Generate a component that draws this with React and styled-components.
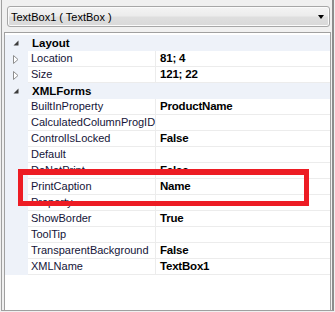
import React from "react";
import styled, { createGlobalStyle } from "styled-components";

const Global = createGlobalStyle`
  html, body { margin: 0; padding: 0; background: #f0f0f0; }
  body { font-family: "Liberation Sans", Arial, sans-serif; }
  #root { width: 335px; height: 312px; }
`;

const Page = styled.div`
  position: relative;
  width: 335px;
  height: 312px;
  box-sizing: border-box;
  padding-left: 1px;
  background: #f0f0f0;
  overflow: hidden;
`;

const Frame = styled.div`
  box-sizing: border-box;
  width: 333px;
  height: 311px;
  border-left: 1px solid #a0a0a0;
  border-right: 2px solid #8c8c8c;
  border-bottom: 1px solid #a0a0a0;
  padding: 6px 1px 0 2px;
  display: flex;
  flex-direction: column;
  gap: 5px;
`;

const Combo = styled.div`
  box-sizing: border-box;
  height: 21px;
  margin: 0 1px 0 3px;
  border: 1px solid #a7a7a7;
  border-radius: 3px;
  background: linear-gradient(#f4f4f4 0%, #ececec 45%, #dedede 55%, #d9d9d9 100%);
  box-shadow: inset 0 0 0 1px #fbfbfb;
  display: flex;
  align-items: center;
  justify-content: space-between;
  padding: 0 5px 0 3px;
  font-size: 11px;
  color: #000;
`;

const Arrow = styled.span`
  width: 0;
  height: 0;
  border-left: 3.5px solid transparent;
  border-right: 3.5px solid transparent;
  border-top: 4px solid #000;
`;

const Grid = styled.div`
  flex: 1;
  box-sizing: border-box;
  border: 1px solid #a0a0a0;
  border-bottom: none;
  background: #fff;
  padding-top: 2px;
`;

const CategoryRow = styled.div`
  display: flex;
  align-items: center;
  height: 16px;
  background: #eef2f9;
  font-weight: bold;
  font-size: 11.5px;
  color: #000;
`;

const Gutter = styled.div`
  width: 23px;
  height: 16px;
  flex: none;
  background: #eef2f9;
  display: flex;
  align-items: center;
  justify-content: center;
  padding-right: 2px;
  box-sizing: border-box;
`;

const PropRow = styled.div`
  display: flex;
  height: 16px;
  font-size: 11px;
`;

const NameCell = styled.div`
  box-sizing: border-box;
  width: 128px;
  flex: none;
  height: 16px;
  line-height: 15px;
  padding-left: 3px;
  border-right: 1px solid #ececec;
  border-bottom: 1px solid #ececec;
  color: #141438;
  white-space: nowrap;
  overflow: hidden;
`;

const ValueCell = styled.div`
  box-sizing: border-box;
  flex: 1;
  height: 16px;
  line-height: 15px;
  padding-left: 4px;
  border-bottom: 1px solid #ececec;
  font-weight: bold;
  font-size: 11.5px;
  color: #000;
  white-space: nowrap;
  overflow: hidden;
  letter-spacing: -0.2px;
`;

const CatLabel = styled.span`
  padding-left: 4px;
  line-height: 16px;
`;

const Highlight = styled.div`
  position: absolute;
  left: 18px;
  top: 169px;
  width: 291px;
  height: 37px;
  box-sizing: border-box;
  border: 5px solid #ed1c24;
  border-top-width: 6px;
  pointer-events: none;
`;

const CollapseIcon = () => (
  <svg width="6" height="6" viewBox="0 0 6 6">
    <polygon points="5.5,0.5 5.5,5.5 0.5,5.5" fill="#3c3c3c" />
  </svg>
);

const ExpandIcon = () => (
  <svg width="6" height="9" viewBox="0 0 6 9">
    <polygon points="0.5,0.5 5,4.5 0.5,8.5" fill="#fff" stroke="#8e8e8e" strokeWidth="1" />
  </svg>
);

const data = [
  { cat: "Layout" },
  { name: "Location", value: "81; 4", expand: true },
  { name: "Size", value: "121; 22", expand: true },
  { cat: "XMLForms" },
  { name: "BuiltInProperty", value: "ProductName" },
  { name: "CalculatedColumnProgID", value: "" },
  { name: "ControlIsLocked", value: "False" },
  { name: "Default", value: "" },
  { name: "DoNotPrint", value: "False" },
  { name: "PrintCaption", value: "Name" },
  { name: "Property", value: "" },
  { name: "ShowBorder", value: "True" },
  { name: "ToolTip", value: "" },
  { name: "TransparentBackground", value: "False" },
  { name: "XMLName", value: "TextBox1" },
];

export default function App() {
  return (
    <>
      <Global />
      <Page>
        <Frame>
          <Combo>
            <span>TextBox1 ( TextBox )</span>
            <Arrow />
          </Combo>
          <Grid>
            {data.map((r, i) =>
              r.cat ? (
                <CategoryRow key={i}>
                  <Gutter>
                    <CollapseIcon />
                  </Gutter>
                  <CatLabel>{r.cat}</CatLabel>
                </CategoryRow>
              ) : (
                <PropRow key={i}>
                  <Gutter>{r.expand ? <ExpandIcon /> : null}</Gutter>
                  <NameCell>{r.name}</NameCell>
                  <ValueCell>{r.value}</ValueCell>
                </PropRow>
              )
            )}
          </Grid>
        </Frame>
        <Highlight />
      </Page>
    </>
  );
}
